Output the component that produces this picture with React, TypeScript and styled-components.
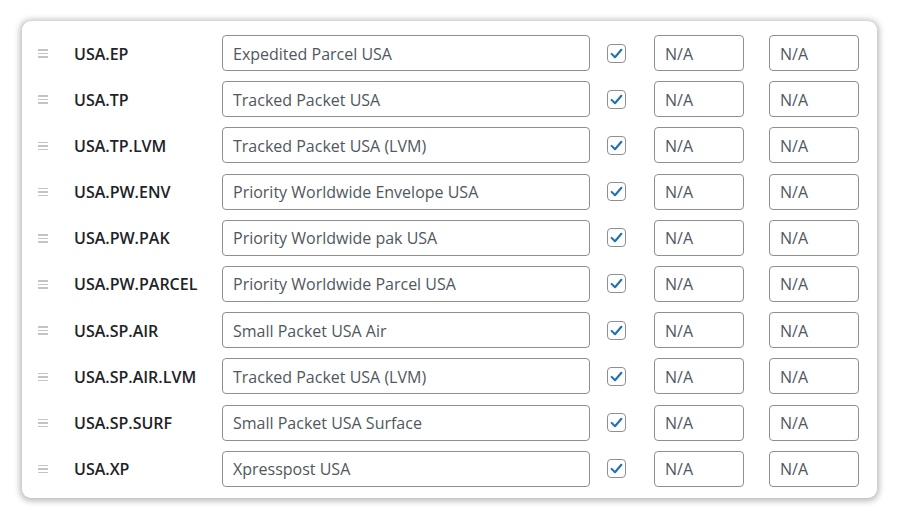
import React from "react";
import styled, { createGlobalStyle } from "styled-components";

const Global = createGlobalStyle`
  html, body { margin: 0; padding: 0; background: #ffffff; }
  body { font-family: "Open Sans", "Noto Sans", sans-serif; }
`;

const Page = styled.div`
  width: 900px;
  height: 521px;
  box-sizing: border-box;
  padding: 21px 23px 0 22px;
`;

const Card = styled.div`
  box-sizing: border-box;
  width: 855px;
  height: 477px;
  background: #ffffff;
  border-radius: 9px;
  box-shadow: 0 1px 6px 2px rgba(0, 0, 0, 0.28);
  padding: 14px 0 0 0;
  display: flex;
  flex-direction: column;
  gap: 10.2px;
`;

const Row = styled.div`
  display: grid;
  grid-template-columns: 52px 148px 368px 64px 90px 25px 90px;
  align-items: center;
  height: 36px;
`;

const Handle = styled.div`
  margin-left: 16px;
  width: 10px;
  display: flex;
  flex-direction: column;
  gap: 2px;
  margin-top: 1px;
  span {
    display: block;
    height: 1.5px;
    background: #c3c4c7;
  }
`;

const Code = styled.div`
  font-family: "Open Sans", "Noto Sans", sans-serif;
  font-weight: 600;
  font-size: 16px;
  color: #1d2327;
  margin-top: 1px;
`;

const TextBox = styled.div<{ $w: number }>`
  box-sizing: border-box;
  width: ${(p) => p.$w}px;
  height: 36px;
  border: 1px solid #8c8f94;
  border-radius: 4px;
  padding: 1px 10px 0;
  display: flex;
  align-items: center;
  font-size: 16px;
  color: #50575e;
  white-space: nowrap;
`;

const CheckCell = styled.div`
  display: flex;
  padding-left: 17px;
`;

const Check = styled.div`
  box-sizing: border-box;
  width: 19px;
  height: 19px;
  border: 1px solid #8c8f94;
  border-radius: 4px;
  display: flex;
  align-items: center;
  justify-content: center;
  background: #fff;
`;

const Spacer = styled.div``;

const rows: [string, string][] = [
  ["USA.EP", "Expedited Parcel USA"],
  ["USA.TP", "Tracked Packet USA"],
  ["USA.TP.LVM", "Tracked Packet USA (LVM)"],
  ["USA.PW.ENV", "Priority Worldwide Envelope USA"],
  ["USA.PW.PAK", "Priority Worldwide pak USA"],
  ["USA.PW.PARCEL", "Priority Worldwide Parcel USA"],
  ["USA.SP.AIR", "Small Packet USA Air"],
  ["USA.SP.AIR.LVM", "Tracked Packet USA (LVM)"],
  ["USA.SP.SURF", "Small Packet USA Surface"],
  ["USA.XP", "Xpresspost USA"],
];

export default function App() {
  return (
    <>
      <Global />
      <Page>
        <Card>
          {rows.map(([code, name]) => (
            <Row key={code}>
              <Handle>
                <span />
                <span />
                <span />
              </Handle>
              <Code>{code}</Code>
              <TextBox $w={368}>{name}</TextBox>
              <CheckCell>
                <Check>
                  <svg width="15" height="15" viewBox="0 0 20 20">
                    <path
                      d="M3.5 10.5 L8 15 L16.5 5"
                      fill="none"
                      stroke="#2271b1"
                      strokeWidth="2.8"
                      strokeLinecap="round"
                      strokeLinejoin="round"
                    />
                  </svg>
                </Check>
              </CheckCell>
              <TextBox $w={90}>N/A</TextBox>
              <Spacer />
              <TextBox $w={90}>N/A</TextBox>
            </Row>
          ))}
        </Card>
      </Page>
    </>
  );
}
